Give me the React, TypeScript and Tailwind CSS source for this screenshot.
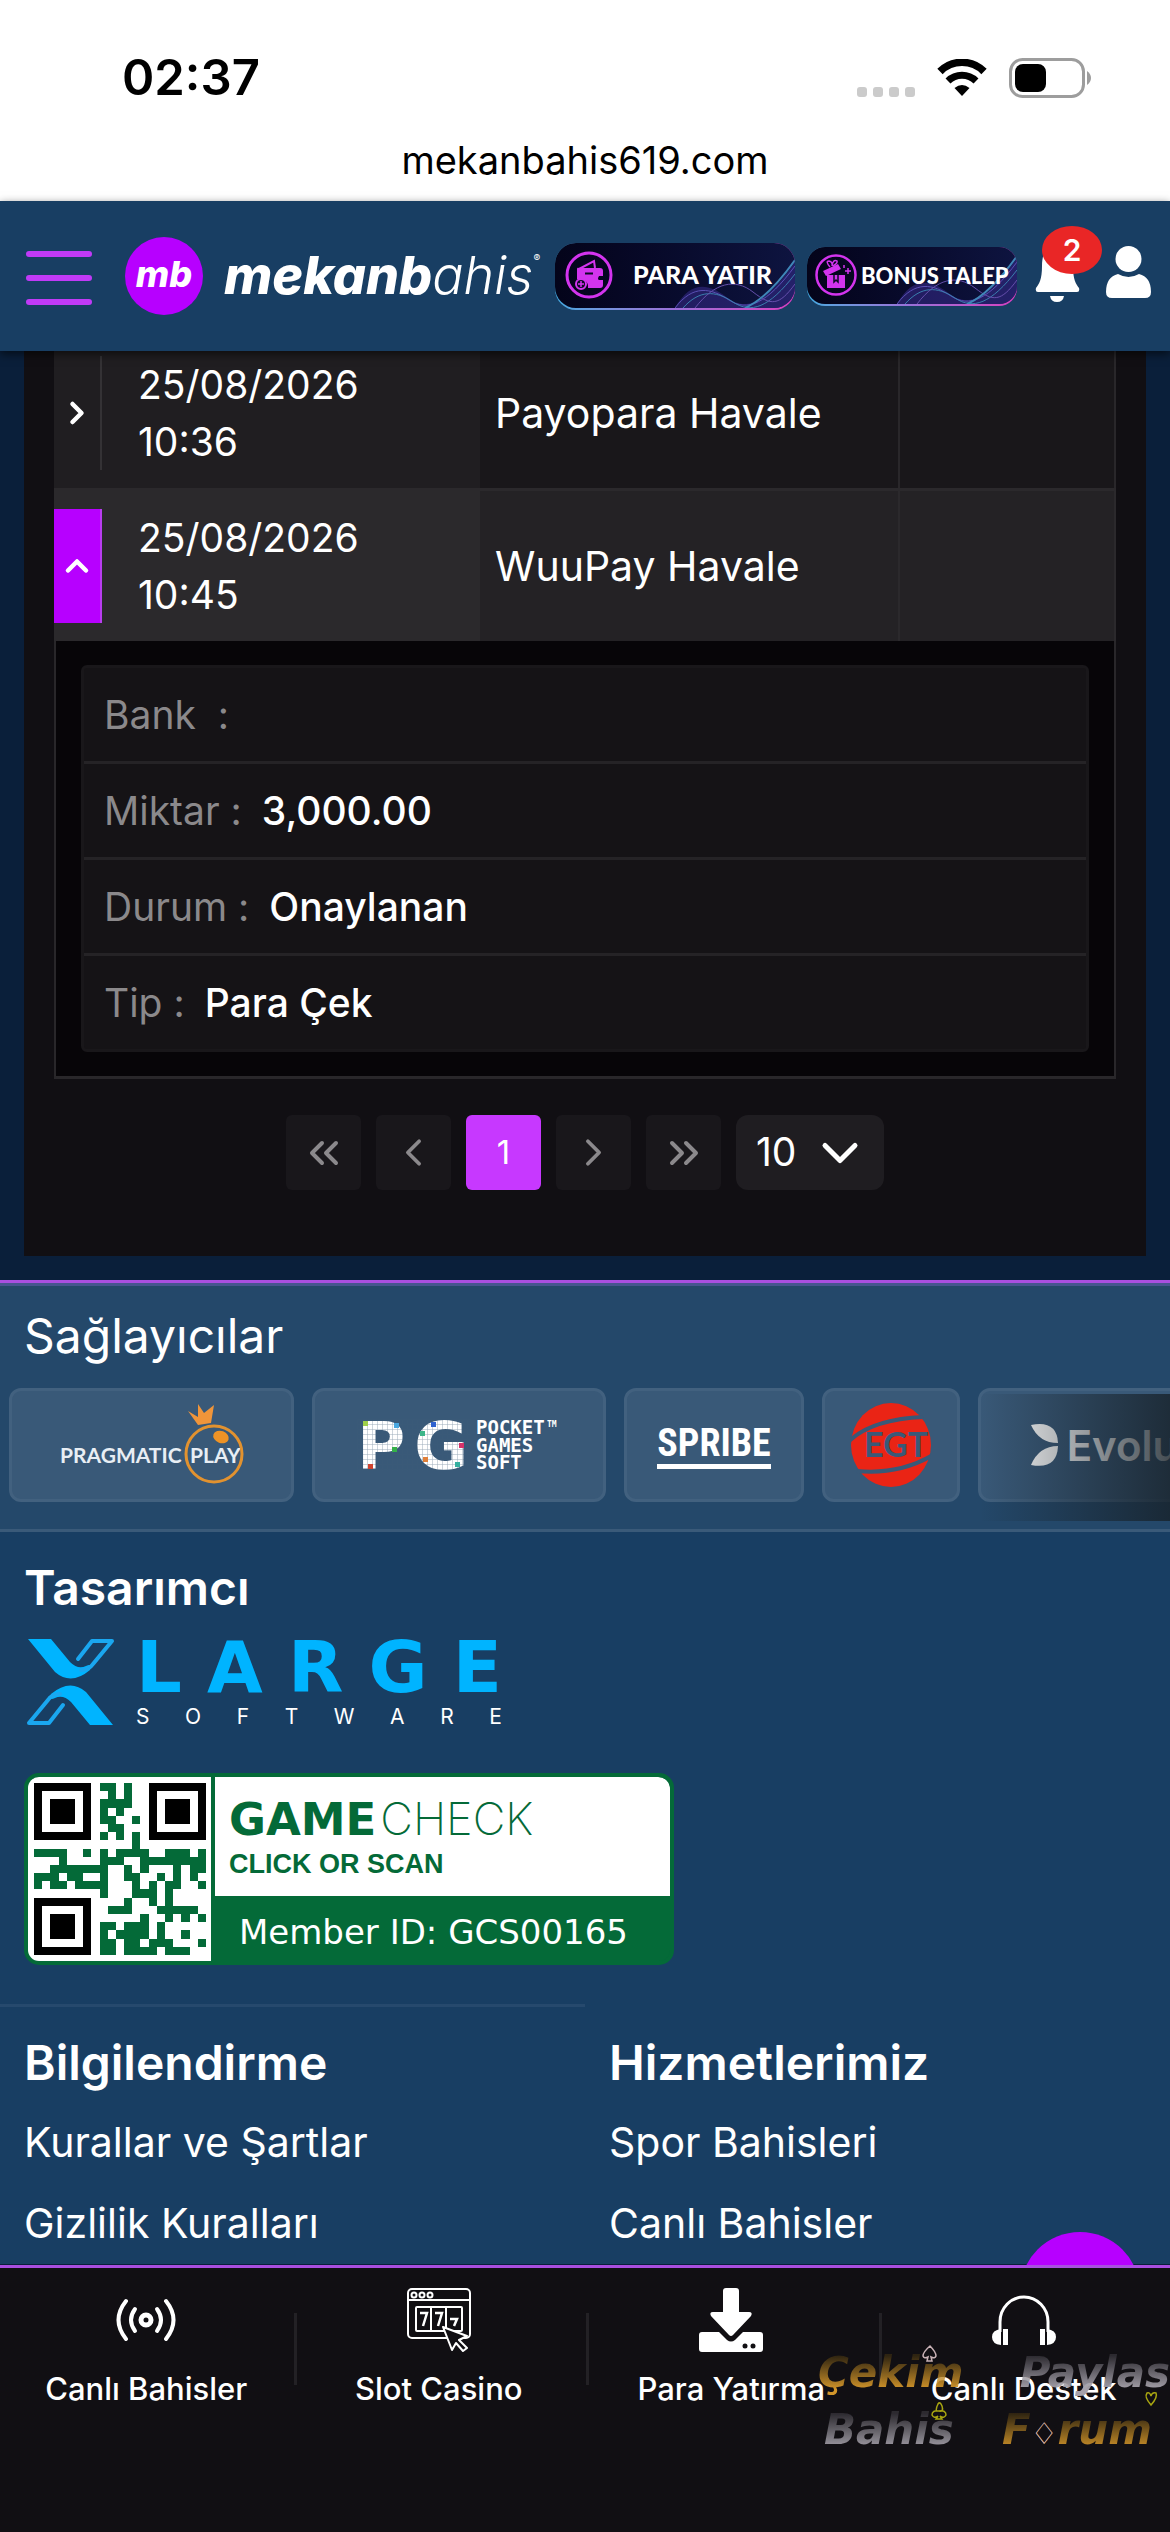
import React, { useState } from 'react';
import { ChevronDown, ChevronLeft, ChevronRight, ChevronUp, ChevronsLeft, ChevronsRight } from 'lucide-react';

const transactions = [
  { id: 1, date: '25/08/2026', time: '10:36', method: 'Payopara Havale' },
  { id: 2, date: '25/08/2026', time: '10:45', method: 'WuuPay Havale' },
];

const details = [
  { label: 'Bank\u00a0 :', value: '' },
  { label: 'Miktar :', value: '3,000.00' },
  { label: 'Durum :', value: 'Onaylanan' },
  { label: 'Tip :', value: 'Para Çek' },
];

const footerColumns = [
  { title: 'Bilgilendirme', links: ['Kurallar ve Şartlar', 'Gizlilik Kuralları'] },
  { title: 'Hizmetlerimiz', links: ['Spor Bahisleri', 'Canlı Bahisler'] },
];

// Data modules of the member QR code, the three finder squares are drawn apart
const qrRows = [
  '........##.#.........',
  '.........#.#.........',
  '........####.........',
  '........#.#..........',
  '........##..#........',
  '.........##..........',
  '........#.#.#........',
  '............#........',
  '####..#.#.####..###.#',
  '...#....###..########',
  '..#######..#.#...#.##',
  '###.##..#..##..#.#.#.',
  '#.##.####...#.#.##..#',
  '........#...###.#....',
  '...........#..#.#....',
  '.........###...#####.',
  '.............#..#.#.#',
  '........##.###.#.....',
  '........#.####.#..#..',
  '........##.##.###...#',
  '........##.####.###..',
];

function StatusBar() {
  return (
    <div className="bg-white text-black pt-12 pb-[17px]">
      <div className="flex items-center justify-between pl-[122px] pr-[79px]">
        <span className="text-[49px] leading-[60px] font-semibold">02:37</span>
        <div className="flex items-center gap-[22px]">
          <svg width="58" height="38" viewBox="0 0 58 38" fill="#cbcbcb">
            <rect x="0" y="28" width="10" height="10" rx="3" />
            <rect x="16" y="28" width="10" height="10" rx="3" />
            <rect x="32" y="28" width="10" height="10" rx="3" />
            <rect x="48" y="28" width="10" height="10" rx="3" />
          </svg>
          <svg width="50" height="38" viewBox="0 0 50 38" fill="none" stroke="#000">
            <path d="M3 12.500 A31 31 0 0 1 47 12.500" strokeWidth="7.500" />
            <path d="M11 22 A20 20 0 0 1 39 22" strokeWidth="7" />
            <path d="M17.500 29 Q25 23 32.500 29 L25 37 Z" fill="#000" stroke="none" />
          </svg>
          <svg width="82" height="40" viewBox="0 0 82 40">
            <rect x="1.500" y="1.500" width="73" height="37" rx="12" fill="none" stroke="#9d9d9d" strokeWidth="3" />
            <rect x="6" y="6" width="31" height="28" rx="8" fill="#000" />
            <path d="M78 13 Q82 16 82 20 Q82 24 78 27 Z" fill="#9d9d9d" />
          </svg>
        </div>
      </div>
      <p className="mt-7 text-center text-[38px] leading-[48px]">mekanbahis619.com</p>
    </div>
  );
}

function Waves() {
  return (
    <svg className="absolute right-0 bottom-0" width="120" height="50" viewBox="0 0 120 50" fill="none">
      <path d="M0 50 C14 24 32 24 50 38 S86 52 120 4 V50 Z" fill="#332a86" opacity="0.6" />
      <path d="M0 50 C18 26 36 30 54 42 S92 46 120 8" stroke="#5a50b4" />
      <path d="M8 50 C24 32 40 32 58 44 S94 50 120 16" stroke="#3a7fae" />
      <path d="M20 50 C40 24 60 20 78 34 S104 48 120 26" stroke="#6650ac" />
      <path d="M70 50 C84 44 100 30 120 2" stroke="#3f86b8" strokeWidth="2" />
    </svg>
  );
}

function WalletIcon() {
  return (
    <svg className="shrink-0" width="48" height="48" viewBox="0 0 48 48">
      <circle cx="24" cy="24" r="22" fill="none" stroke="#d334ee" strokeWidth="3" />
      <path d="M14 18 L29 10 L30 17" fill="none" stroke="#d334ee" strokeWidth="2" />
      <path d="M12 18 Q12 16 14 17 H35 Q38 17 38 20 V25 H34 Q32 28 34 29 H38 V34 Q38 37 35 37 H23 Q24 28 12 28 Z" fill="#d334ee" />
      <path d="M20 22.500 H28" stroke="#0b0b26" strokeWidth="2" />
      <circle cx="16" cy="33" r="5" fill="#0b0b26" stroke="#d334ee" strokeWidth="2" />
      <path d="M16 30 V36 M13 33 H19" stroke="#d334ee" strokeWidth="1.500" />
    </svg>
  );
}

function GiftIcon() {
  return (
    <svg className="shrink-0" width="42" height="42" viewBox="0 0 42 42">
      <circle cx="21" cy="21" r="19.500" fill="none" stroke="#d334ee" strokeWidth="2.500" />
      <path d="M12 21 H30 V34 H12 Z" fill="#d334ee" />
      <path d="M8 17 L23 10 L26 15 L11 22 Z" fill="#d334ee" />
      <path d="M15 13 Q10 7 14 7 Q18 8 17 12 Q18 5 22 7 Q23 9 18 12" fill="none" stroke="#d334ee" strokeWidth="1.500" />
      <path d="M19 21 V28 L21 26 L23 28 V21" fill="none" stroke="#0b0b26" strokeWidth="1.500" />
      <path d="M33 14 V20 M30 17 H36 M29 11 V14" stroke="#d334ee" strokeWidth="1.500" />
    </svg>
  );
}

function Header() {
  return (
    <header className="relative z-10 flex h-[150px] shrink-0 items-center bg-[#183e63] pl-[26px] pr-[19px] shadow-[0_3px_9px_rgba(0,0,0,0.6)]">
      <button aria-label="Menü" className="flex w-[66px] shrink-0 flex-col gap-[18px] pt-1">
        <span className="h-1.5 w-full rounded-full bg-[#c03af7]" />
        <span className="h-1.5 w-full rounded-full bg-[#c03af7]" />
        <span className="h-1.5 w-full rounded-full bg-[#c03af7]" />
      </button>
      <a href="#" className="ml-[33px] flex items-center gap-[21px] italic">
        <span className="flex size-[78px] items-center justify-center rounded-full bg-[#b700ff] pb-1 text-[36px] leading-none font-extrabold text-white">
          mb
        </span>
        <span className="flex items-baseline text-[52px] leading-[60px] text-white">
          <span className="font-extrabold">mekanb</span>
          <span className="font-light">ahis</span>
          <sup className="mt-3 self-start text-[10px] leading-none">®</sup>
        </span>
      </a>
      <div className="ml-auto flex items-center">
        <button className="w-[240px] rounded-[21px] bg-gradient-to-r from-[#3fa9e0] via-[#9a6fd8] to-[#d63cc0] pb-0.5">
          <span className="relative flex h-[65px] items-center overflow-hidden rounded-[21px] bg-gradient-to-r from-[#04041a] to-[#0e1440] pl-2.5">
            <Waves />
            <WalletIcon />
            <span className="relative pl-5 font-['Lato',sans-serif] text-[25px] font-black whitespace-nowrap text-white">PARA YATIR</span>
          </span>
        </button>
        <button className="ml-3 w-[210px] rounded-[18px] bg-gradient-to-r from-[#3fa9e0] via-[#9a6fd8] to-[#d63cc0] pb-0.5">
          <span className="relative flex h-[57px] items-center overflow-hidden rounded-[18px] bg-gradient-to-r from-[#04041a] to-[#0e1440] pl-2">
            <Waves />
            <GiftIcon />
            <span className="relative pl-1 font-['Lato',sans-serif] text-[22px] font-black whitespace-nowrap text-white">BONUS TALEP</span>
          </span>
        </button>
        <button aria-label="Bildirimler" className="relative ml-[18px] pb-2">
          <svg width="45" height="60" viewBox="0 0 45 60" fill="#fff">
            <path d="M22 2 C34 2 38 12 38 24 C38 38 41 42 44 46 Q45 50 42 50 H3 Q0 50 1 46 C4 42 7 38 7 24 C7 12 11 2 22 2 Z" />
            <path d="M15 54 H29 Q28 60 22 60 Q16 60 15 54 Z" />
          </svg>
          <span className="absolute -top-4 left-[7px] flex h-12 w-[60px] items-center justify-center rounded-[50%] bg-[#e92626] text-[30px] font-semibold text-white">2</span>
        </button>
        <button aria-label="Hesap" className="ml-[26px] pb-2">
          <svg width="45" height="52" viewBox="0 0 45 52" fill="#fff">
            <circle cx="22.500" cy="13" r="13" />
            <path d="M12 28 Q22.500 34 33 28 Q45 31 45 46 Q45 52 39 52 H6 Q0 52 0 46 Q0 31 12 28 Z" />
          </svg>
        </button>
      </div>
    </header>
  );
}

function TransactionTable() {
  const [openId, setOpenId] = useState(2);

  return (
    <table className="w-full table-fixed border-separate border-spacing-0 text-[39px] leading-[57px] text-white">
      <colgroup>
        <col className="w-[426px]" />
        <col className="w-[420px]" />
        <col />
      </colgroup>
      <tbody>
        {transactions.map((row) => {
          const open = row.id === openId;
          const cell = open ? 'border-t-[3px] border-[#2b292c]' : 'border-[#29272a]';
          return (
            <React.Fragment key={row.id}>
              <tr className={open ? 'bg-[#242225]' : 'bg-[#19171a]'}>
                <td className={open ? `${cell} bg-[#2b292c] py-[18px]` : `${cell} bg-[#201e21] py-[18px]`}>
                  <div className="flex">
                    <button
                      aria-label="Detay"
                      onClick={() => setOpenId(open ? 0 : row.id)}
                      className={
                        open
                          ? 'flex w-12 items-center justify-center border-r-2 border-[#b93df0] bg-[#b700ff]'
                          : 'flex w-12 items-center justify-center border-r-2 border-[#343235]'
                      }
                    >
                      {open ? <ChevronUp size={36} strokeWidth={3} /> : <ChevronRight size={36} strokeWidth={3} />}
                    </button>
                    <span className="pl-9">
                      {row.date}
                      <br />
                      {row.time}
                    </span>
                  </div>
                </td>
                <td className={`${cell} border-r-2 pl-[15px] text-[41px]`}>{row.method}</td>
                <td className={`${cell} border-r-2`} />
              </tr>
              {open && (
                <tr className="bg-[#070508]">
                  <td colSpan={3} className="border-x-2 border-b-[3px] border-[#29272a] px-[25px] py-6">
                    <dl className="divide-y-[3px] divide-[#252326] rounded-md border-[3px] border-[#19171a] bg-[#151316]">
                      {details.map((item) => (
                        <div key={item.label} className="flex gap-5 px-5 py-[18px]">
                          <dt className="text-[#8b898b]">{item.label}</dt>
                          <dd className="font-medium">{item.value}</dd>
                        </div>
                      ))}
                    </dl>
                  </td>
                </tr>
              )}
            </React.Fragment>
          );
        })}
      </tbody>
    </table>
  );
}

function Pagination() {
  const arrow = 'flex size-[75px] items-center justify-center rounded-md bg-[#19171b] text-[#8b898c]';
  return (
    <div className="flex justify-center gap-[15px] pt-9 pb-[66px]">
      <button aria-label="İlk sayfa" className={arrow}><ChevronsLeft size={48} strokeWidth={2} /></button>
      <button aria-label="Önceki" className={arrow}><ChevronLeft size={45} strokeWidth={2} /></button>
      <button className="size-[75px] rounded-md bg-[#c738ff] text-[33px] text-white">1</button>
      <button aria-label="Sonraki" className={arrow}><ChevronRight size={45} strokeWidth={2} /></button>
      <button aria-label="Son sayfa" className={arrow}><ChevronsRight size={48} strokeWidth={2} /></button>
      <div className="relative">
        <select aria-label="Satır sayısı" className="h-[75px] w-[148px] appearance-none rounded-xl bg-[#1f1d21] pl-5 text-[39px] text-white">
          <option>10</option>
          <option>25</option>
        </select>
        <ChevronDown size={60} strokeWidth={2} className="pointer-events-none absolute top-2 right-3.5 text-white" />
      </div>
    </div>
  );
}

function PragmaticLogo() {
  return (
    <svg width="184" height="84" viewBox="0 0 184 84" fontFamily="Lato, sans-serif">
      <text x="0" y="60" fontSize="21" fontWeight="700" fill="#e8eef4">PRAGMATIC</text>
      <text x="130" y="60" fontSize="21" fontWeight="700" fill="#e8eef4">PLAY</text>
      <circle cx="154" cy="51" r="28" fill="none" stroke="#e2922f" strokeWidth="3" />
      <ellipse cx="161" cy="34" rx="8" ry="6" fill="#ee9326" transform="rotate(20 161 34)" />
      <path d="M138 22 L128 8 L138 14 L138 1 L144 10 L154 2 L151 20 Z" fill="#f0953a" />
    </svg>
  );
}

function PgLogo() {
  return (
    <svg width="204" height="52" viewBox="0 0 204 52" fontFamily="'DejaVu Sans', sans-serif" fontWeight="700">
      <defs>
        <pattern id="pixels" width="5" height="5" patternUnits="userSpaceOnUse">
          <path d="M0 0 H5 M0 0 V5" stroke="#395978" strokeWidth="1" opacity="0.5" />
        </pattern>
      </defs>
      <text x="0" y="50" fontSize="66" fill="#fff">P</text>
      <text x="57" y="50" fontSize="66" fill="#fff">G</text>
      <rect width="114" height="52" fill="url(#pixels)" />
      <rect x="6" y="2" width="5" height="5" fill="#9fcf4a" />
      <rect x="37" y="4" width="5" height="5" fill="#4aa8e0" />
      <rect x="35" y="28" width="5" height="5" fill="#35b04a" />
      <rect x="11" y="45" width="5" height="5" fill="#d0432f" />
      <rect x="74" y="3" width="5" height="5" fill="#2f62d0" />
      <rect x="63" y="12" width="5" height="5" fill="#3db68a" />
      <rect x="66" y="38" width="5" height="5" fill="#e0803a" />
      <rect x="102" y="24" width="5" height="5" fill="#d8336a" />
      <rect x="98" y="43" width="5" height="5" fill="#35b0a0" />
      <g fontFamily="'DejaVu Sans Mono', monospace" fontSize="19" fill="#fff">
        <text x="119" y="15">POCKET</text>
        <text x="119" y="33">GAMES</text>
        <text x="119" y="50">SOFT</text>
        <text x="190" y="8" fontSize="8">TM</text>
      </g>
    </svg>
  );
}

function EgtLogo() {
  return (
    <svg width="80" height="84" viewBox="0 0 80 84">
      <ellipse cx="40" cy="42" rx="40" ry="42" fill="#ea2415" />
      <path d="M-2 38 Q22 16 72 14" fill="none" stroke="#395978" strokeWidth="4" />
      <path d="M6 68 Q48 72 82 52" fill="none" stroke="#395978" strokeWidth="4" />
      <text x="13" y="54" fontSize="34" fontWeight="700" fontFamily="Lato, sans-serif" fill="#395978">EGT</text>
    </svg>
  );
}

function Providers() {
  const card = 'flex h-[114px] shrink-0 items-center justify-center rounded-xl border-[3px] border-[#42617f] bg-[#395978]';
  return (
    <section className="border-t-[3px] border-b-[3px] border-t-[#a94fe0] border-b-[#3a5a79] bg-[#24486a]">
      <div className="border-t-[3px] border-[#46558f] pt-[23px]">
        <h2 className="pl-6 text-[48px] leading-[54px] text-white">Sağlayıcılar</h2>
        <div className="relative mt-[25px] flex gap-[18px] overflow-hidden pb-[27px] pl-[9px]">
          <a href="#pragmatic" aria-label="Pragmatic Play" className={`${card} w-[285px]`}><PragmaticLogo /></a>
          <a href="#pg" aria-label="PG Soft" className={`${card} w-[294px]`}><PgLogo /></a>
          <a href="#spribe" className={`${card} w-[180px]`}>
            <span className="border-b-[5px] border-white font-['Liberation_Sans_Narrow','Roboto_Condensed','Roboto',sans-serif] text-[38px] leading-[42px] font-bold text-white">SPRIBE</span>
          </a>
          <a href="#egt" aria-label="EGT" className={`${card} w-[138px]`}><EgtLogo /></a>
          <a href="#evolution" className={`${card} w-[330px] gap-2`}>
            <svg width="28" height="42" viewBox="0 0 28 42" fill="#fff">
              <path d="M0 1 Q26 -4 27 19 Q8 19 0 1 Z" />
              <path d="M0 41 Q26 46 27 22 Q8 22 0 41 Z" />
            </svg>
            <span className="text-[42px] font-semibold text-white">Evolution</span>
          </a>
          <div className="absolute top-1.5 right-0 bottom-2 w-[190px] bg-gradient-to-r from-transparent to-[#172129]/80" />
        </div>
      </div>
    </section>
  );
}

function XMark() {
  return (
    <svg width="87" height="86" viewBox="0 0 87 86">
      <defs>
        <g id="x-half">
          <path d="M1 0 H24 L43 23 Q51 31 59 27 Q66 24 63 31 Q44 47 28 33 Z" fill="#00b4ff" />
          <path d="M51 20 L65 2 H85 L66 25 Q62 31 54 31" fill="none" stroke="#1aa7f0" strokeWidth="4" strokeLinecap="round" strokeLinejoin="round" />
        </g>
      </defs>
      <use href="#x-half" />
      <use href="#x-half" transform="rotate(180 43.500 43)" />
    </svg>
  );
}

function GameCheck() {
  return (
    <a href="#gamecheck" className="mt-12 flex h-[192px] w-[650px] overflow-hidden rounded-[15px] border-4 border-[#046a38] bg-[#046a38]">
      <span className="flex w-[183px] items-center justify-center bg-white">
        <svg width="172" height="172" viewBox="0 0 21 21" shapeRendering="crispEdges">
          {qrRows.map((line, y) =>
            line.split('').map((cell, x) => (cell === '#' ? <rect key={`${x}-${y}`} x={x} y={y} width="1" height="1" fill="#046a38" /> : null))
          )}
          {[[0, 0], [14, 0], [0, 14]].map(([x, y]) => (
            <g key={`${x}-${y}`}>
              <rect x={x} y={y} width="7" height="7" fill="#000" />
              <rect x={x + 1} y={y + 1} width="5" height="5" fill="#fff" />
              <rect x={x + 2} y={y + 2} width="3" height="3" fill="#000" />
            </g>
          ))}
        </svg>
      </span>
      <span className="ml-1 flex flex-1 flex-col">
        <span className="flex h-[119px] flex-col rounded-tr-[12px] bg-white pt-[17px] pl-3.5 font-['Liberation_Sans',sans-serif] text-[#046a38]">
          <span className="flex items-baseline gap-1 text-[45px] leading-[50px]">
            <span className="font-['DejaVu_Sans',sans-serif] font-bold">GAME</span>
            <span className="font-['Inter',sans-serif] font-extralight">CHECK</span>
          </span>
          <span className="text-[27px] leading-[38px] font-bold">CLICK OR SCAN</span>
        </span>
        <span className="flex flex-1 items-center pt-2 pl-6 font-['DejaVu_Sans',sans-serif] text-[34px] text-white">Member ID: GCS00165</span>
      </span>
    </a>
  );
}

function Footer() {
  return (
    <footer className="bg-[#183e63] text-white">
      <div className="px-6 pt-[29px] pb-[39px]">
        <h3 className="text-[48px] leading-[54px] font-semibold">Tasarımcı</h3>
        <a href="#xlarge" className="mt-6 flex gap-[22px] pl-[3px]">
          <XMark />
          <span className="flex w-[366px] flex-col justify-between">
            <span className="flex justify-between font-['DejaVu_Sans',sans-serif] text-[72px] leading-[56px] font-bold text-[#00b4ff]">
              {'LARGE'.split('').map((c) => <span key={c}>{c}</span>)}
            </span>
            <span className="flex justify-between text-[21px] leading-4">
              {'SOFTWARE'.split('').map((c, i) => <span key={i}>{c}</span>)}
            </span>
          </span>
        </a>
        <GameCheck />
      </div>
      <div className="grid grid-cols-2">
        {footerColumns.map((col, i) => (
          <div key={col.title} className={i === 0 ? 'border-t-[3px] border-[#26496d] pt-[29px] pl-6' : 'border-t-[3px] border-transparent pt-[29px] pl-6'}>
            <h3 className="text-[48px] leading-[54px] font-semibold">{col.title}</h3>
            <ul className="mt-3 text-[41px] leading-[81px]">
              {col.links.map((link) => (
                <li key={link}><a href="#">{link}</a></li>
              ))}
            </ul>
          </div>
        ))}
      </div>
    </footer>
  );
}

function LiveIcon() {
  return (
    <svg width="64" height="64" viewBox="0 0 64 64" fill="none" stroke="#fff" strokeLinecap="round">
      <circle cx="32" cy="32" r="5" strokeWidth="5" />
      <path d="M21 21 Q13 32 21 43 M43 21 Q51 32 43 43" strokeWidth="4" />
      <path d="M12 13 Q-3 32 12 51 M52 13 Q67 32 52 51" strokeWidth="4" />
    </svg>
  );
}

function SlotIcon() {
  return (
    <svg width="64" height="64" viewBox="0 0 64 64" fill="none" stroke="#fff" strokeWidth="2">
      <rect x="1" y="1" width="62" height="49" rx="4" />
      <path d="M1 12 H63" />
      <circle cx="7" cy="7" r="2.500" />
      <circle cx="15" cy="7" r="2.500" />
      <circle cx="23" cy="7" r="2.500" />
      <rect x="9" y="19" width="46" height="24" rx="1" />
      <path d="M24 19 V43 M39 19 V43" />
      <path d="M13 25 H20 L16 38 M28 25 H35 L31 38 M43 31 H50 L47 38" strokeWidth="2.500" />
      <path d="M36 39 L60 48 L52 52 L60 60 L56 63 L49 55 L45 62 Z" fill="#110f13" strokeLinejoin="round" />
    </svg>
  );
}

function DepositIcon() {
  return (
    <svg width="64" height="64" viewBox="0 0 64 64" fill="#fff">
      <path d="M27 0 H37 Q40 0 40 3 V24 H50 Q54 24 52 28 L34 47 Q32 49 30 47 L12 28 Q10 24 14 24 H24 V3 Q24 0 27 0 Z" />
      <path d="M3 44 H20 L28 52 Q32 55 36 52 L44 44 H61 Q64 44 64 47 V61 Q64 64 61 64 H3 Q0 64 0 61 V47 Q0 44 3 44 Z" />
      <circle cx="46" cy="58" r="2.500" fill="#110f13" />
      <circle cx="54" cy="58" r="2.500" fill="#110f13" />
    </svg>
  );
}

function SupportIcon() {
  return (
    <svg width="64" height="64" viewBox="0 0 64 64" fill="none" stroke="#fff">
      <path d="M8 44 V34 A24 25 0 0 1 56 34 V44" strokeWidth="3" />
      <path d="M9 41 V57 Q0 56 0 49 Q0 42 9 41 Z M55 41 V57 Q64 56 64 49 Q64 42 55 41 Z" fill="#fff" stroke="none" />
      <path d="M13.500 41 V57 M50.500 41 V57" strokeWidth="5" />
    </svg>
  );
}

// Forum stamp that floats over the last two tabs
function ForumStamp() {
  const gold = 'bg-gradient-to-b from-[#5a430f]/40 from-20% to-[#d2952a] to-80% bg-clip-text text-transparent';
  const silver = 'bg-gradient-to-b from-[#55525a]/40 from-20% to-[#a5a1aa] to-80% bg-clip-text text-transparent';
  return (
    <div className="pointer-events-none absolute top-[76px] right-0 w-[352px] font-['DejaVu_Sans',sans-serif] text-[42px] leading-[57px] font-bold italic">
      <p className="flex justify-between">
        <span className={gold}>Çekim</span>
        <span className={silver}>Paylas</span>
      </p>
      <p className="flex justify-between pr-[18px] pl-1.5">
        <span className={silver}>Bahis</span>
        <span className={gold}>
          F<span className="text-[30px] font-normal text-[#d9b7b7] not-italic">♢</span>rum
        </span>
      </p>
      <svg className="absolute top-0 left-0" width="352" height="110" viewBox="0 0 352 110" fill="none" strokeWidth="1.500">
        <path d="M112 2 Q118 8 118 12 Q117 15 113 13 L114 17 H109 L110 13 Q106 15 105 12 Q105 8 112 2 Z" stroke="#c9b2b6" />
        <path d="M120 60 Q116 68 121 67 Q114 66 114 71 Q116 75 120 72 L118 75 H124 L122 72 Q126 75 128 71 Q128 66 121 67 Q126 68 124 62 Q122 57 120 60 Z" stroke="#a8a511" />
        <path d="M333 61 Q326 53 329 49 Q332 48 333 52 Q334 48 338 49 Q340 53 333 61 Z" stroke="#a8a511" />
      </svg>
    </div>
  );
}

const tabs = [
  { label: 'Canlı Bahisler', icon: <LiveIcon /> },
  { label: 'Slot Casino', icon: <SlotIcon /> },
  { label: 'Para Yatırma', icon: <DepositIcon /> },
  { label: 'Canlı Destek', icon: <SupportIcon /> },
];

function BottomNav() {
  return (
    <nav className="relative z-10 shrink-0 border-t-[3px] border-[#a94fe0] bg-[#110f13] pb-[125px]">
      <div className="grid grid-cols-4">
        {tabs.map((tab, i) => (
          <a key={tab.label} href="#" className="relative flex flex-col items-center pt-5 text-[31px] leading-9 font-medium text-white">
            {tab.icon}
            <span className="mt-[19px]">{tab.label}</span>
            {i < 3 && <span className="absolute top-[45px] -right-1 h-[72px] w-[3px] bg-[#232125]" />}
          </a>
        ))}
      </div>
      <ForumStamp />
    </nav>
  );
}

export default function App() {
  return (
    <div className="flex h-screen flex-col overflow-hidden bg-[#0a1f3a] font-['Inter','Liberation_Sans',sans-serif]">
      <StatusBar />
      <Header />
      <main className="relative flex-1 overflow-hidden">
        <div className="-mt-[13px]">
          <div className="mx-6 mb-6 bg-[#110f13] px-[30px]">
            <TransactionTable />
            <Pagination />
          </div>
          <Providers />
          <Footer />
        </div>
        <button aria-label="Yukarı çık" className="absolute right-[30px] -bottom-[87px] size-[120px] rounded-full bg-[#b700ff]" />
      </main>
      <BottomNav />
    </div>
  );
}
